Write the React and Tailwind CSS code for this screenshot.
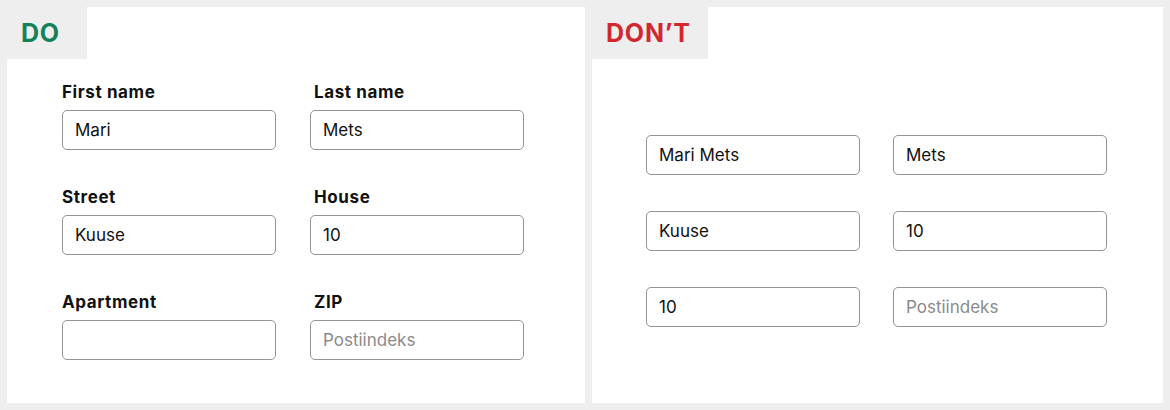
import React from 'react';

const font = { fontFamily: 'Inter, "Noto Sans", sans-serif' };

const Input = ({ value, placeholder }) => (
  <div className="h-[40px] w-[214px] rounded-[5px] border-[1.5px] border-[#949494] bg-white px-[12px] pt-[2px] flex items-center text-[17px]">
    {value ? (
      <span className="text-[#111]">{value}</span>
    ) : (
      <span className="text-[#8a8a8a]">{placeholder}</span>
    )}
  </div>
);

const Field = ({ label, value, placeholder, right }) => (
  <div className="flex flex-col">
    <label className={`text-[17px] leading-[26px] font-bold tracking-[0.6px] text-[#111] mb-[5px] ${right ? 'pl-[4px]' : ''}`}>{label}</label>
    <Input value={value} placeholder={placeholder} />
  </div>
);

const Tab = ({ text, color, width }) => (
  <div className={`h-[52px] bg-[#eeeeee] flex items-center pl-[14px] pt-[1px] ${width}`}>
    <span className={`text-[25px] font-bold tracking-[0.8px] ${color}`}>{text}</span>
  </div>
);

export default function App() {
  const good = [
    { label: 'First name', value: 'Mari' },
    { label: 'Last name', value: 'Mets', right: true },
    { label: 'Street', value: 'Kuuse' },
    { label: 'House', value: '10', right: true },
    { label: 'Apartment', value: '' },
    { label: 'ZIP', value: '', placeholder: 'Postiindeks', right: true },
  ];
  const bad = [
    { value: 'Mari Mets' },
    { value: 'Mets' },
    { value: 'Kuuse' },
    { value: '10' },
    { value: '10' },
    { value: '', placeholder: 'Postiindeks' },
  ];

  return (
    <div style={font} className="w-[1170px] h-[410px] bg-[#eeeeee] p-[7px] flex gap-[7px]">
      <div className="w-[578px] h-[396px] bg-white flex flex-col">
        <Tab text="DO" color="text-[#13815a]" width="w-[80px]" />
        <div className="grid grid-cols-[214px_214px] gap-x-[34px] gap-y-[34px] pl-[55px] pt-[20px]">
          {good.map((f) => (
            <Field key={f.label} {...f} />
          ))}
        </div>
      </div>
      <div className="w-[571px] h-[396px] bg-white flex flex-col">
        <Tab text="DON’T" color="text-[#d3262f]" width="w-[116px]" />
        <div className="grid grid-cols-[214px_215px] gap-x-[33px] gap-y-[36px] pl-[54px] pt-[76px]">
          {bad.map((f, i) => (
            <Input key={i} {...f} />
          ))}
        </div>
      </div>
    </div>
  );
}
